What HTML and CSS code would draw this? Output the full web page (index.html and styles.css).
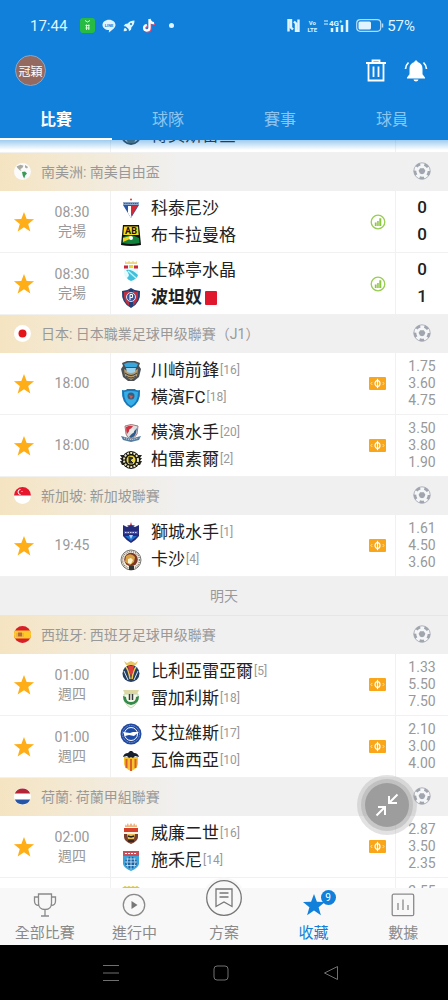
FILE: index.html
```html
<!DOCTYPE html>
<html lang="zh-Hant">
<head>
  <meta charset="UTF-8">
  <meta name="viewport" content="width=device-width, initial-scale=1.0">
  <title>收藏</title>
  <link rel="stylesheet" href="styles.css">
</head>
<body>
  <!-- Shared icons -->
  <svg class="sprite" aria-hidden="true">
    <symbol id="star" viewBox="0 0 24 24"><path d="M12 1l2.900 7.800 8.100.3-6.400 5.100 2.300 8.100L12 17.600l-6.900 4.700 2.300-8.100L1 9.100l8.100-.3z"/></symbol>
    <symbol id="ball" viewBox="0 0 18 18">
      <circle cx="9" cy="9" r="8.200" fill="#f5f6f8" stroke="#a8acb5" stroke-width=".9"/>
      <circle cx="9" cy="9" r="7" fill="none" stroke="#a0a5ae" stroke-width="2.600" stroke-dasharray="4.600 4.196"/>
      <path d="M7.200 6.300h3.600l1.600 2.400-1.300 2.800-2.100.7-2.100-.7-1.300-2.800z" fill="#a0a5ae"/>
    </symbol>
    <symbol id="stats" viewBox="0 0 16 16">
      <circle cx="8" cy="8" r="6.800" fill="none" stroke="#9c5" stroke-width="1.300"/>
      <path d="M4.800 8.500h1.800V12H4.800zM7.200 7h1.500v5H7.200zM9.300 4.300h2V12h-2z" fill="#8dc63f"/>
    </symbol>
    <symbol id="money" viewBox="0 0 17 13">
      <rect width="17" height="13" rx="1" fill="#faa61a"/>
      <path d="M3.200 5L2 6.500 3.200 8M13.800 5L15 6.500 13.800 8" fill="none" stroke="#ffe2a8"/>
      <ellipse cx="8.500" cy="6.500" rx="2.500" ry="2.900" fill="none" stroke="#fff" stroke-width="1.200"/>
      <path d="M8.500 1.800v9.400" stroke="#fff" stroke-width="1.200"/>
    </symbol>
  </svg>

  <div class="app">
    <header class="header">
      <div class="status-bar">
        <span class="clock">17:44</span>
        <svg width="15" height="15" viewBox="0 0 15 15"><rect width="15" height="15" rx="3" fill="#27bb43"/><path d="M5 2.500q2.500 3 5 0M5.500 7.500h4M5.500 10h4M6.500 6.500v5.500M8.800 6.500v5.500" fill="none" stroke="#d9ffd9"/></svg>
        <svg width="14" height="14" viewBox="0 0 14 14"><path d="M7 .8c3.700 0 6.500 2.300 6.500 5.200 0 2.700-3.500 5.200-6.700 7.500l.2-2.400C3.300 11 .5 8.900.5 6S3.300.8 7 .8z" fill="#dff4ff"/><text x="7" y="7.500" font-size="4" font-weight="700" text-anchor="middle" fill="#1180da">LINE</text></svg>
        <svg width="12" height="12" viewBox="0 0 12 12"><path d="M11.500.5c-3 0-5 .8-6.700 3L2.300 4 .7 6l2.200.4 2.700 2.700.4 2.200 2-1.600.5-2.500c2.200-1.700 3-3.700 3-6.700zM1 8.500l1.500-.5 1.500 1.500-.5 1.500-2.800.3z" fill="#dff4ff"/><circle cx="8" cy="4" r="1.100" fill="#1180da"/></svg>
        <svg width="14" height="15" viewBox="0 0 14 15"><path d="M7.500 1v8.800a2.700 2.700 0 1 1-2.700-2.700M7.500 1c.3 2.600 2 4 4.500 4.200" transform="translate(1 1)" fill="none" stroke="#ee4d79" stroke-width="2"/><path d="M7.500 1v8.800a2.700 2.700 0 1 1-2.700-2.700M7.500 1c.3 2.600 2 4 4.500 4.200" fill="none" stroke="#fff" stroke-width="2.300"/></svg>
        <span class="dot"></span>
        <span class="spacer"></span>
        <svg width="13" height="13" viewBox="0 0 13 13"><path d="M1.500 12.500V1h2.500v7.500l2 2M11.500.5V12H9V4.500l-2-2" fill="none" stroke="#dff4ff" stroke-width="2.400"/></svg>
        <span class="volte">Vo<br>LTE</span>
        <svg width="25" height="14" viewBox="0 0 25 14"><path d="M0 2h4M0 5h4" stroke="#dff4ff"/><text x="5" y="6.500" font-size="8" font-weight="700" fill="#dff4ff">4G⁺</text><path d="M8 9v4M13 8v5M18 6v7M23 1v12" stroke="#dff4ff" stroke-width="2.500"/></svg>
        <svg width="28" height="13" viewBox="0 0 28 13"><rect x=".7" y=".7" width="24" height="11.600" rx="3.500" fill="none" stroke="#b5dcf6" stroke-width="1.200"/><rect x="2.500" y="2.500" width="12.500" height="8" rx="1.500" fill="#dff4ff"/><path d="M26.500 4.500v4" stroke="#b5dcf6" stroke-width="1.500"/></svg>
        <span class="battery">57%</span>
      </div>

      <div class="toolbar">
        <button class="avatar">冠穎</button>
        <button class="tool" aria-label="刪除">
          <svg width="22" height="24" viewBox="0 0 22 24" fill="none" stroke="#fff"><path d="M1 4h20" stroke-width="2"/><path d="M7.500 3V1.500h7V3M3.500 4.500v17h15v-17" stroke-width="1.800"/><path d="M8.500 7.500v10.500M13.500 7.500v10.500" stroke-width="1.800"/></svg>
        </button>
        <button class="tool" aria-label="通知">
          <svg width="24" height="24" viewBox="0 0 24 24"><path d="M12 1.500c1 0 1.600.7 1.600 1.600 3.200.8 4.900 3.300 4.900 6.700v5.400l2.500 3.300v1H3v-1l2.500-3.300V9.800c0-3.400 1.700-5.900 4.900-6.700 0-.9.600-1.600 1.600-1.600zM9.500 20.500h5c-.3 1.300-1.200 2-2.500 2s-2.200-.7-2.500-2z" fill="#fff"/><path d="M4.500 3.500C2.700 5.200 1.800 7.200 1.500 10M19.500 3.500c1.800 1.700 2.700 3.700 3 6.500" fill="none" stroke="#fff" stroke-width="1.700"/></svg>
        </button>
      </div>

      <nav class="tabs">
        <button class="tab active">比賽</button>
        <button class="tab">球隊</button>
        <button class="tab">賽事</button>
        <button class="tab">球員</button>
      </nav>
    </header>

    <main class="content">
      <div class="match-list" id="match-list">
        <article class="match">
          <div></div>
          <div class="time"></div>
          <div class="teams">
            <div class="team"></div>
            <div class="team"><svg viewBox="0 0 22 22"><circle cx="11" cy="10" r="9" fill="#eee" stroke="#345" stroke-width="2"/><path d="M5 12h12l-3 6H8z" fill="#566"/></svg><span>博美斯雷查</span></div>
          </div>
          <div class="info"></div>
          <div class="odds"></div>
        </article>

        <!-- Copa Libertadores -->
        <h2 class="league">
          <svg class="flag" viewBox="0 0 17 17"><circle cx="8.500" cy="8.500" r="8.500" fill="#fbfbfb"/><path d="M2.500 3.500l4-1.800 3 1-1.200 2.200-2 1 1.200 2-1.700-.6L3.500 5zM11 2l3 2-1 1.500-2-1z" fill="#aaa99f"/><path d="M8 9l3-.6 2 2-1.800 2.100-1 3-1.400-2.700z" fill="#3b9b55"/></svg>
          <span>南美洲: 南美自由盃</span>
          <svg class="ball"><use href="#ball"/></svg>
        </h2>
        <article class="match">
          <button class="fav" aria-label="收藏"><svg><use href="#star"/></svg></button>
          <div class="time">08:30<br>完場</div>
          <div class="teams">
            <div class="team"><svg viewBox="0 0 22 22"><circle cx="11" cy="1.500" r="1" fill="#d33"/><path d="M3 4h16v3H3z" fill="#8fa9cc"/><path d="M3 7h16l-8 13z" fill="#2a58a6"/><path d="M8 8h4v10l-1 2-3-5z" fill="#fff"/><path d="M11 8h6.500L11 19z" fill="#d42a35"/><path d="M4 5.500h14" stroke="#3d5b92" stroke-dasharray="1.500 .7"/></svg><span>科泰尼沙</span></div>
            <div class="team"><svg viewBox="0 0 22 22"><path d="M3 0h16l2 20q-10 2-20 0z" fill="#111"/><path d="M4 1.500h14l.7 8.500H3.300z" fill="#f6d91f"/><path d="M3 12q8-4 16 1l.6 5q-8.600 2-17.200 0z" fill="#12813c"/><path d="M3 13l7-2 2 2-9 4z" fill="#f3d31f"/><circle cx="11" cy="13" r="2" fill="#fff"/><text x="11" y="9" font-size="9" font-weight="700" text-anchor="middle" fill="#111">AB</text></svg><span>布卡拉曼格</span></div>
          </div>
          <div class="info"><svg class="stats-icon"><use href="#stats"/></svg></div>
          <div class="score">0<br>0</div>
        </article>
        <article class="match">
          <button class="fav" aria-label="收藏"><svg><use href="#star"/></svg></button>
          <div class="time">08:30<br>完場</div>
          <div class="teams">
            <div class="team"><svg viewBox="0 0 22 22"><path d="M5 1l2 1.500L9 1l2 1.500L13 1l2 1.500L17 1v3H5z" fill="#ecd783"/><path d="M4 5h14v9q-1 5-7 7-6-2-7-7z" fill="#e7fbfd"/><path d="M4 5.500h4v3H4zM14 5.500h4v3h-4z" fill="#cc2738"/><path d="M9 5h4v3H9z" fill="#efcf37"/><path d="M6 10q6-1 12 5-1 4-7 6-3-1-4-3 4-3-1-8z" fill="#42bfdc"/><path d="M8 11l8 7" stroke="#b8f3f8" stroke-width="1.500"/></svg><span>士砵亭水晶</span></div>
            <div class="team winner"><svg viewBox="0 0 22 22"><path d="M2 4q5 0 9-3 4 3 9 3 1 12-9 17Q1 16 2 4z" fill="#233f75"/><path d="M4 5q4 0 5-2v16Q3 14 4 5zM18 5q-4 0-5-2v16q6-5 5-14z" fill="#bd3042"/><circle cx="11" cy="10" r="4.500" fill="#39559a" stroke="#d7deef"/><path d="M10 13V7.500h2.500v3H10" fill="none" stroke="#fff"/></svg><span>波坦奴</span><i class="red-card"></i></div>
          </div>
          <div class="info"><svg class="stats-icon"><use href="#stats"/></svg></div>
          <div class="score">0<br>1</div>
        </article>

        <!-- Japan -->
        <h2 class="league">
          <svg class="flag" viewBox="0 0 17 17"><circle cx="8.500" cy="8.500" r="8.500" fill="#fff"/><circle cx="8.500" cy="8.500" r="4" fill="#e3151b"/></svg>
          <span>日本: 日本職業足球甲级聯賽（J1）</span>
          <svg class="ball"><use href="#ball"/></svg>
        </h2>
        <article class="match">
          <button class="fav" aria-label="收藏"><svg><use href="#star"/></svg></button>
          <div class="time">18:00</div>
          <div class="teams">
            <div class="team"><svg viewBox="0 0 22 22"><path d="M2 3l5-2h8l5 2-1 3 2 3-2 8-5 4H8l-5-4-2-8 2-3z" fill="#4b5055"/><path d="M4 4l4-1.500h6L18 4l-1.500 3h-11z" fill="#39a6dc"/><path d="M4 9q7 5 14 0l-1 7-6 4-6-4z" fill="#b79c6d"/><path d="M6 8h10l-1 4q-4 2-8 0z" fill="#9bd2ed"/><path d="M5 13q6 5 12 0M6 16q5 4 10 0" fill="none" stroke="#394047"/></svg><span>川崎前鋒</span><small>[16]</small></div>
            <div class="team"><svg viewBox="0 0 22 22"><path d="M2 3q4 1 5-1h8q1 2 5 1 1 13-9 18Q1 16 2 3z" fill="#1877b8"/><path d="M4 5q7-2 14 0 0 10-7 14Q4 15 4 5z" fill="#36aee6"/><circle cx="11" cy="9" r="3.500" fill="#405c7d"/><path d="M9 8l4 1-2 3z" fill="#c46058"/></svg><span>橫濱FC</span><small>[18]</small></div>
          </div>
          <div class="info"><svg class="money-icon"><use href="#money"/></svg></div>
          <div class="odds">1.75<br>3.60<br>4.75</div>
        </article>
        <article class="match">
          <button class="fav" aria-label="收藏"><svg><use href="#star"/></svg></button>
          <div class="time">18:00</div>
          <div class="teams">
            <div class="team"><svg viewBox="0 0 22 22"><path d="M5 4q6-3 13 0l-1 8q-2 4-6 5-4-1-5-5z" fill="#ddd" stroke="#a2787c"/><path d="M6 5q4-2 7-1l-6 8q-1-3-1-7z" fill="#cf3341"/><path d="M17 6l-8 9 2 1q4-1 5-5z" fill="#2f5a8c"/><circle cx="11.500" cy="9" r="2.500" fill="#e9ece9"/><path d="M1 14l4 1 6 2 6-2 4-1-2 4-8 2-8-2z" fill="#557da0"/><path d="M4 16q7 3 14 0" fill="none" stroke="#e1eaf2" stroke-dasharray="1 1"/></svg><span>橫濱水手</span><small>[20]</small></div>
            <div class="team"><svg viewBox="0 0 22 22"><path d="M0 6h22l-2 3h2l-2 3h2l-2 4H2l-2-4h2L0 9h2z" fill="#272724"/><circle cx="11" cy="11" r="9" fill="#151515"/><circle cx="11" cy="11" r="7" fill="none" stroke="#e9e2b8" stroke-width="2" stroke-dasharray="2 1.200"/><circle cx="11" cy="11" r="4.500" fill="#ecd73c"/><path d="M9 8l4 1-3 2 3 3H9z" fill="#333" stroke="#222"/></svg><span>柏雷素爾</span><small>[2]</small></div>
          </div>
          <div class="info"><svg class="money-icon"><use href="#money"/></svg></div>
          <div class="odds">3.50<br>3.80<br>1.90</div>
        </article>

        <!-- Singapore -->
        <h2 class="league">
          <svg class="flag" viewBox="0 0 17 17"><circle cx="8.500" cy="8.500" r="8.500" fill="#fff"/><path d="M0 8.500a8.500 8.500 0 0 1 17 0z" fill="#e5182d"/><path d="M6.500 2.500a2.500 2.500 0 1 0 0 5" fill="none" stroke="#fff"/><circle cx="8" cy="4.500" r=".6" fill="#fff"/></svg>
          <span>新加坡: 新加坡聯賽</span>
          <svg class="ball"><use href="#ball"/></svg>
        </h2>
        <article class="match">
          <button class="fav" aria-label="收藏"><svg><use href="#star"/></svg></button>
          <div class="time">19:45</div>
          <div class="teams">
            <div class="team"><svg viewBox="0 0 22 22"><path d="M11 0l1 3h3l-2 2H9L7 3h3z" fill="#c44356"/><path d="M3 3l4 2 4-2 4 2 4-2v11q-3 4-8 7-5-3-8-7z" fill="#252c79"/><path d="M4 9h14v3H4z" fill="#4149a8"/><path d="M5 10.500h12" stroke="#d4d9fa" stroke-dasharray="1.500 1"/><path d="M5 14h12l-6 5z" fill="#1c72d0"/><path d="M9 13h4l-2 4z" fill="#b3d4fa"/></svg><span>獅城水手</span><small>[1]</small></div>
            <div class="team"><svg viewBox="0 0 22 22"><circle cx="11" cy="11" r="10" fill="#f4f0e8" stroke="#777"/><circle cx="11" cy="11" r="8.500" fill="none" stroke="#8f836e" stroke-width="1.500" stroke-dasharray="1 1"/><circle cx="11" cy="10.500" r="6.800" fill="#7c3827"/><path d="M6 7q5-4 9 1l-1 5-4 3-5-3z" fill="#d7a146"/><path d="M8 10l3-1 2 2-2 4-3-1z" fill="#fff1cc"/><path d="M9 17h5v4H9z" fill="#333"/></svg><span>卡沙</span><small>[4]</small></div>
          </div>
          <div class="info"><svg class="money-icon"><use href="#money"/></svg></div>
          <div class="odds">1.61<br>4.50<br>3.60</div>
        </article>

        <div class="day">明天</div>

        <!-- Spain -->
        <h2 class="league">
          <svg class="flag" viewBox="0 0 17 17"><circle cx="8.500" cy="8.500" r="8.500" fill="#d81e28"/><path d="M.8 4.500h15.400q1.600 4 0 8H.8q-1.600-4 0-8z" fill="#ffc928"/><path d="M4 6.500h4v4H4z" fill="#b86b38"/><path d="M3 7v4M9 7v4" stroke="#d7a06c"/></svg>
          <span>西班牙: 西班牙足球甲级聯賽</span>
          <svg class="ball"><use href="#ball"/></svg>
        </h2>
        <article class="match">
          <button class="fav" aria-label="收藏"><svg><use href="#star"/></svg></button>
          <div class="time">01:00<br>週四</div>
          <div class="teams">
            <div class="team"><svg viewBox="0 0 22 22"><path d="M4 0l3 2 4-2 4 2 3-2-2 4H6z" fill="#e8c766"/><ellipse cx="11" cy="12.500" rx="8.500" ry="8.500" fill="#243f62"/><path d="M6 6q3 4 4 12M16 6q-3 4-4 12" fill="none" stroke="#edc654" stroke-width="1.500"/><path d="M8 5h6l-1 6-2 4-2-4z" fill="#dd3e3b"/><path d="M4 10l4 9M18 10l-4 9" stroke="#dce4ef"/></svg><span>比利亞雷亞爾</span><small>[5]</small></div>
            <div class="team"><svg viewBox="0 0 22 22"><path d="M3 2h16l-2 4H5z" fill="#dcd8a6"/><path d="M4 6h14q1 10-7 14Q3 16 4 6z" fill="#f5f7e8" stroke="#c5d8b4"/><path d="M3 8q0 8 8 9 8-1 8-9l-3 1q0 5-5 5t-5-5z" fill="#34894b"/><path d="M9.500 6v6M12.500 6v6" stroke="#383b3c" stroke-width="1.500"/></svg><span>雷加利斯</span><small>[18]</small></div>
          </div>
          <div class="info"><svg class="money-icon"><use href="#money"/></svg></div>
          <div class="odds">1.33<br>5.50<br>7.50</div>
        </article>
        <article class="match">
          <button class="fav" aria-label="收藏"><svg><use href="#star"/></svg></button>
          <div class="time">01:00<br>週四</div>
          <div class="teams">
            <div class="team"><svg viewBox="0 0 22 22"><circle cx="11" cy="11" r="10.500" fill="#2149a0"/><circle cx="11" cy="11" r="8.500" fill="none" stroke="#85a4dc" stroke-dasharray="1 .8"/><circle cx="11" cy="11" r="6.500" fill="#1c4ca8" stroke="#fff"/><path d="M3 9l7 1 3-1h6l-5 4-5-1-4 1z" fill="#fff"/></svg><span>艾拉維斯</span><small>[17]</small></div>
            <div class="team"><svg viewBox="0 0 22 22"><path d="M4 7h14v7q-1 5-7 7-6-2-7-7z" fill="#f6c22d"/><path d="M6.500 9v9M11 9v12M15.500 9v9" stroke="#d9602c" stroke-width="2"/><path d="M3 7q1-4 5-4l2-2h2l2 2q4 0 5 4l-4-1-2 2-2-1-2 1-2-2z" fill="#18202e"/></svg><span>瓦倫西亞</span><small>[10]</small></div>
          </div>
          <div class="info"><svg class="money-icon"><use href="#money"/></svg></div>
          <div class="odds">2.10<br>3.00<br>4.00</div>
        </article>

        <!-- Netherlands -->
        <h2 class="league">
          <svg class="flag" viewBox="0 0 17 17"><circle cx="8.500" cy="8.500" r="8.500" fill="#fff"/><path d="M.8 5.500a8.500 8.500 0 0 1 15.400 0z" fill="#b32534"/><path d="M.8 11.500a8.500 8.500 0 0 0 15.400 0z" fill="#2854a5"/></svg>
          <span>荷蘭: 荷蘭甲組聯賽</span>
          <svg class="ball"><use href="#ball"/></svg>
        </h2>
        <article class="match">
          <button class="fav" aria-label="收藏"><svg><use href="#star"/></svg></button>
          <div class="time">02:00<br>週四</div>
          <div class="teams">
            <div class="team"><svg viewBox="0 0 22 22"><path d="M5 1l1 2 2-3 1 3 2-3 2 3 1-3 2 3 1-2v3H5z" fill="#f0b37e"/><path d="M4 6h14v8q0 4-7 7-7-3-7-7z" fill="#77402d"/><path d="M4 5h14v4H4z" fill="#d6412c"/><path d="M4 9h14v2H4z" fill="#fff1df"/><path d="M7 11h8l-1 5H8z" fill="#f0bd57"/><path d="M8 13l3 1 3-1M8 18h6" stroke="#222" fill="none" stroke-width="1.500"/></svg><span>威廉二世</span><small>[16]</small></div>
            <div class="team"><svg viewBox="0 0 22 22"><path d="M3 1h16v5H3z" fill="#c5505b"/><path d="M3 6h16v8q-1 4-8 7-7-3-8-7z" fill="#3aa5dd"/><path d="M5 3.500h12" stroke="#fff" stroke-dasharray="2 1"/><circle cx="11" cy="12.500" r="6" fill="#1b619f"/><path d="M5 12h12M6 9h10M6 15.500h10M11 6.500v13M8 7.500q-2 5 0 10M14 7.500q2 5 0 10" fill="none" stroke="#ccecff" stroke-width=".8"/></svg><span>施禾尼</span><small>[14]</small></div>
          </div>
          <div class="info"><svg class="money-icon"><use href="#money"/></svg></div>
          <div class="odds">2.87<br>3.50<br>2.35</div>
        </article>
        <article class="match">
          <div></div>
          <div class="time"></div>
          <div class="teams">
            <div class="team"><svg viewBox="0 0 22 22"><path d="M2 3l3-2 2 1 2-1 2 1 2-1 2 1 2-1 3 2-2 4H4z" fill="#d8c93c"/><path d="M4 7h14v8l-7 5-7-5z" fill="#e9d83c"/></svg></div>
            <div class="team"></div>
          </div>
          <div class="info"></div>
          <div class="odds">2.55</div>
        </article>
      </div>

      <button class="collapse" aria-label="收合">
        <svg width="24" height="24" viewBox="0 0 24 24" fill="none" stroke="#fff" stroke-width="2"><path d="M22.500 1.500L14 10M14 3v7h8M1.500 22.500L10 14M3 14h7v8"/></svg>
      </button>
    </main>

    <nav class="bottom-nav">
      <a href="#all">
        <svg width="24" height="26" viewBox="0 0 24 26" fill="none" stroke="#8a8a8a" stroke-width="1.300"><path d="M5.500 2h13v9c0 4-2.500 6.500-6.500 6.500S5.500 15 5.500 11zM5.500 5h-4v4c0 3 2 4.500 4.500 4.500M18.500 5h4v4c0 3-2 4.500-4.500 4.500M12 17.500V24M8 24h8"/></svg>
        <span>全部比賽</span>
      </a>
      <a href="#live">
        <svg width="24" height="26" viewBox="0 0 24 26"><circle cx="12" cy="13" r="10.700" fill="none" stroke="#8a8a8a" stroke-width="1.300"/><path d="M9.500 9l6 4-6 4z" fill="#777"/></svg>
        <span>進行中</span>
      </a>
      <a href="#plan">
        <svg class="plan-icon" width="42" height="42" viewBox="0 0 42 42" fill="none" stroke="#777" stroke-width="1.300"><circle cx="21" cy="21" r="20.500" fill="#f8f8f8" stroke="none"/><circle cx="21" cy="21" r="17.300"/><path d="M13 12h16v17.500L21 25l-8 4.500zM16.500 16h9M16.500 20h9"/></svg>
        <span>方案</span>
      </a>
      <a href="#favorites" class="active">
        <svg width="24" height="26" viewBox="0 0 24 24" fill="#1180da"><use href="#star"/></svg>
        <b class="badge">9</b>
        <span>收藏</span>
      </a>
      <a href="#data">
        <svg width="24" height="26" viewBox="0 0 24 26" fill="none" stroke="#8a8a8a" stroke-width="1.300"><rect x="1.200" y="2.200" width="21.500" height="21.500" rx="1.500"/><path d="M7 11v7M12 7.500V18M17 13v5"/></svg>
        <span>數據</span>
      </a>
    </nav>

    <div class="system-nav">
      <button aria-label="選單"><svg width="18" height="18" viewBox="0 0 18 18" fill="none" stroke="#707070"><path d="M1 1.500h16M1 9h16M1 16.500h16"/></svg></button>
      <button aria-label="主畫面"><svg width="18" height="18" viewBox="0 0 18 18" fill="none" stroke="#707070"><rect x="2" y="2" width="14" height="14" rx="3"/></svg></button>
      <button aria-label="返回"><svg width="18" height="18" viewBox="0 0 18 18" fill="none" stroke="#707070"><path d="M15.500 2.500v13L2.500 9z"/></svg></button>
    </div>
  </div>

  <script>
    // Start the list at the end of the first match
    document.getElementById('match-list').scrollTop = 49;
  </script>
</body>
</html>
```
FILE: styles.css
```css
/* General styling */
* {
  box-sizing: border-box;
}
body {
  margin: 0;
  font-family: Roboto, "Noto Sans CJK TC", sans-serif;
  color: #222;
  background-color: #fff;
}
button {
  padding: 0;
  border: none;
  background: none;
  font-family: inherit;
  cursor: pointer;
}
svg {
  flex-shrink: 0;
}
.sprite {
  position: absolute;
  width: 0;
  height: 0;
}
.app {
  display: flex;
  flex-direction: column;
  height: 100vh;
}

/* Header */
.header {
  background-color: #1180da;
  color: #fff;
}
.status-bar {
  display: flex;
  align-items: center;
  gap: 7px;
  height: 51px;
  padding: 0 33px 0 30px;
  color: #dff4ff;
  font-size: 15px;
}
.clock {
  margin-right: 6px;
}
.dot {
  width: 5px;
  height: 5px;
  margin-left: 6px;
  border-radius: 50%;
  background-color: #dff4ff;
}
.spacer {
  flex: 1;
}
.volte {
  font-size: 6px;
  font-weight: bold;
  line-height: 7px;
  text-align: center;
}
.battery {
  margin-left: -4px;
}
.toolbar {
  display: flex;
  align-items: center;
  gap: 17px;
  height: 39px;
  padding: 0 20px 0 15px;
}
.avatar {
  width: 31px;
  height: 31px;
  margin-right: auto;
  border: 1px solid #84a8c8;
  border-radius: 50%;
  background-color: #94695f;
  color: #fff;
  font-size: 12px;
  white-space: nowrap;
}
.tool {
  display: flex;
}
.tabs {
  display: flex;
  height: 50px;
}
.tab {
  flex: 1;
  padding-top: 8px;
  border-bottom: 2px solid transparent;
  color: #8ec5ef;
  font-size: 16px;
}
.tab.active {
  border-bottom-color: #fff;
  color: #fff;
  font-weight: bold;
}

/* Match list */
.content {
  position: relative;
  flex: 1;
  min-height: 0;
}
.content::before {
  content: "";
  position: absolute;
  top: 0;
  left: 0;
  right: 0;
  height: 10px;
  background: linear-gradient(rgba(17, 128, 218, 0.4), rgba(17, 128, 218, 0));
}
.match-list {
  height: 100%;
  overflow-y: auto;
  scrollbar-width: none;
}
.league {
  display: flex;
  align-items: center;
  height: 38px;
  margin: 0;
  padding: 0 17px 2px 14px;
  background: linear-gradient(90deg, #f5e4c1, #f0f0f0 180px);
  color: #999;
  font-size: 14px;
  font-weight: normal;
}
.flag {
  width: 17px;
  height: 17px;
  margin-right: 10px;
}
.ball {
  width: 18px;
  height: 18px;
  margin-left: auto;
}
.match {
  display: grid;
  grid-template-columns: 48px 62px 1fr 35px 53px;
  height: 62px;
  border-bottom: 1px solid #f1f1f1;
}
.fav svg {
  display: block;
  width: 22px;
  height: 22px;
  margin: 0 auto;
  fill: #ffae17;
}
.time {
  align-self: center;
  padding-right: 14px;
  color: #999;
  font-size: 14px;
  line-height: 19px;
  text-align: center;
}
.teams {
  padding: 4px 0 3px 9px;
  border-left: 1px solid #f1f1f1;
}
.team {
  display: flex;
  align-items: center;
  height: 27px;
  font-size: 17px;
  line-height: 27px;
  white-space: nowrap;
}
.team svg {
  width: 22px;
  height: 22px;
  margin-right: 9px;
}
.team small {
  margin-left: 1px;
  color: #999;
  font-size: 12px;
}
.winner {
  font-weight: bold;
}
.red-card {
  width: 12px;
  height: 14px;
  margin-left: 3px;
  border-radius: 1px;
  background-color: #e0182d;
}
.info {
  display: flex;
  align-items: center;
  justify-content: center;
}
.stats-icon {
  width: 16px;
  height: 16px;
}
.money-icon {
  width: 17px;
  height: 13px;
}
.score,
.odds {
  border-left: 1px solid #f1f1f1;
  text-align: center;
}
.score {
  padding-top: 3px;
  font-size: 17px;
  font-weight: 500;
  line-height: 27px;
}
.odds {
  padding-top: 5px;
  color: #999;
  font-size: 14px;
  line-height: 17px;
}
.day {
  height: 39px;
  border-bottom: 1px solid #e6e6e6;
  background-color: #f0f0f0;
  color: #999;
  font-size: 14px;
  line-height: 39px;
  text-align: center;
}

/* Floating button over the list */
.collapse {
  position: absolute;
  right: 39px;
  bottom: 61px;
  display: flex;
  align-items: center;
  justify-content: center;
  width: 44px;
  height: 44px;
  border-radius: 50%;
  background-color: #9d9d9d;
  box-shadow: 0 0 0 4px rgba(160, 160, 160, 0.4), 0 0 0 8px rgba(160, 160, 160, 0.3);
}

/* Bottom navigation */
.bottom-nav {
  display: flex;
  align-items: flex-end;
  height: 57px;
  background-color: #f8f8f8;
  z-index: 1;
}
.bottom-nav a {
  position: relative;
  display: flex;
  flex: 1;
  flex-direction: column;
  align-items: center;
  padding-bottom: 2px;
  color: #8a8a8a;
  font-size: 15px;
  line-height: 20px;
  text-decoration: none;
}
.bottom-nav svg {
  margin-bottom: 5px;
}
.bottom-nav .plan-icon {
  margin-bottom: 4px;
}
.bottom-nav .active {
  color: #1180da;
}
.badge {
  position: absolute;
  top: -2px;
  left: 50%;
  width: 15px;
  height: 15px;
  margin-left: 7px;
  border-radius: 50%;
  background-color: #1180da;
  color: #fff;
  font-size: 10px;
  font-weight: normal;
  line-height: 15px;
  text-align: center;
}

/* Android buttons */
.system-nav {
  display: flex;
  align-items: center;
  justify-content: center;
  gap: 92px;
  height: 55px;
  padding-right: 6px;
  background-color: #000;
}
.system-nav button {
  display: flex;
}
```
